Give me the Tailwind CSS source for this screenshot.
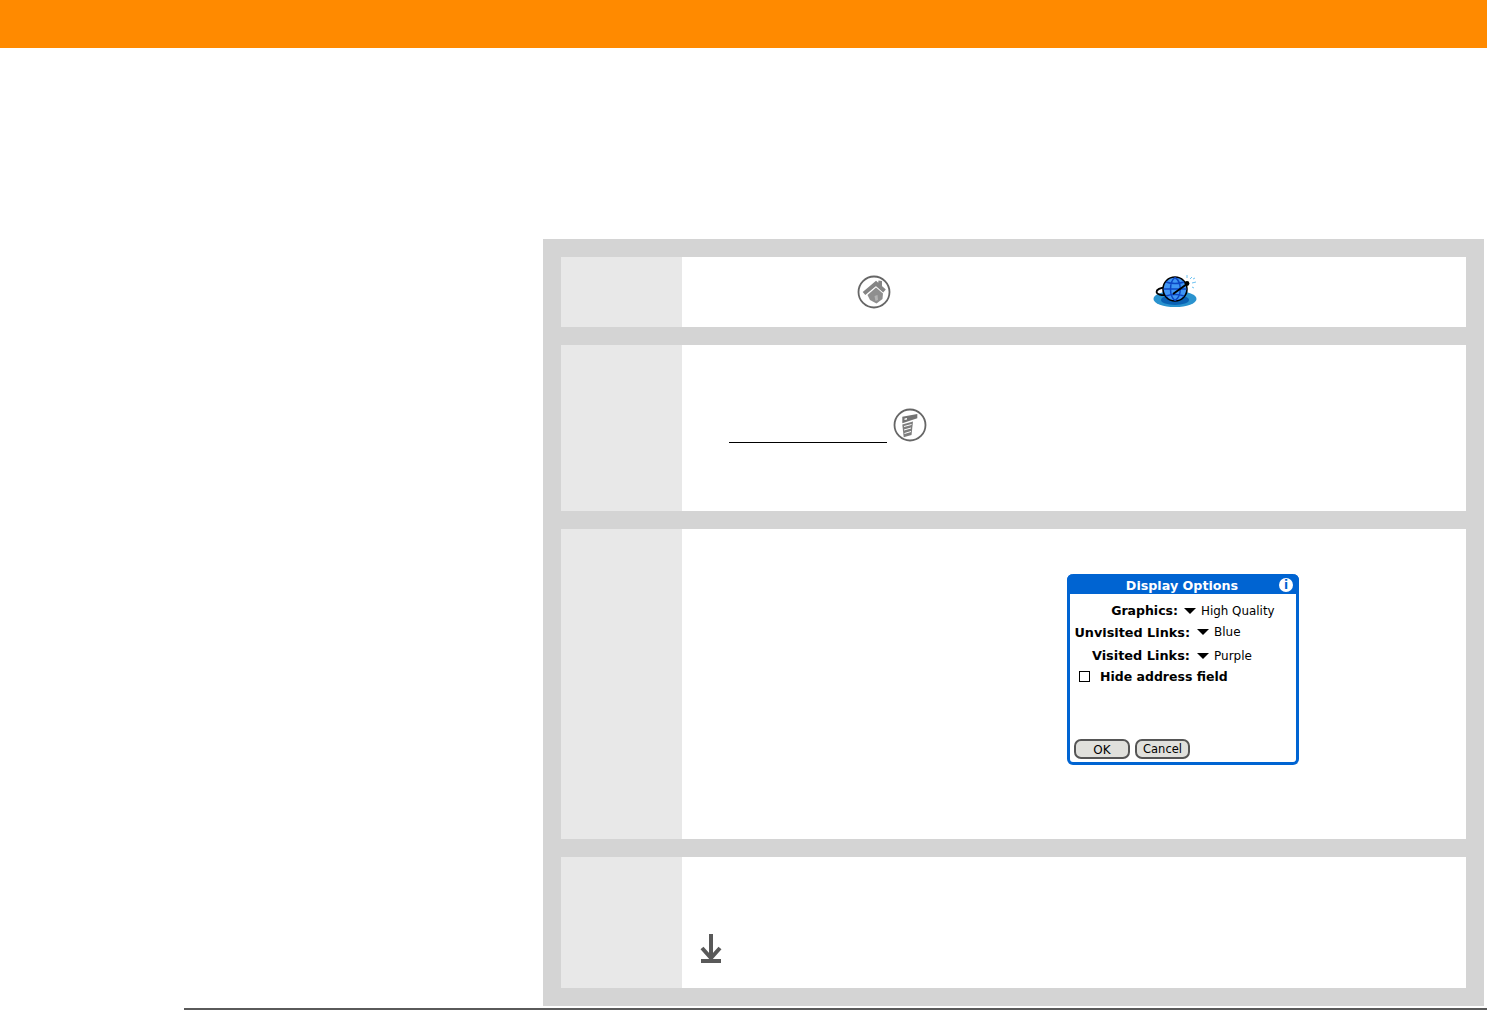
<!DOCTYPE html>
<html lang="en">
<head>
    <meta charset="UTF-8">
    <meta name="viewport" content="width=device-width, initial-scale=1.0">
    <title>Display Options</title>
    <script src="https://cdn.jsdelivr.net/npm/@tailwindcss/browser@4"></script>
</head>
<body class="bg-white h-[1010px] overflow-hidden flex flex-col font-['Liberation_Sans',sans-serif]">

<div class="h-12 bg-[#ff8a00]"></div>

<div class="flex justify-end pr-[3px] pt-[191px]">
    <div class="w-[941px] h-[767px] bg-[#d4d4d4] p-[18px] flex flex-col gap-[18px]">

        <div class="h-[70px] flex bg-white">
            <div class="w-[121px] bg-[#e8e8e8]"></div>
            <div class="flex items-center">
                <svg class="ml-[175px] mb-[1px]" width="34" height="34" viewBox="0 0 34 34">
                    <circle cx="17" cy="17" r="15.5" fill="#fff" stroke="#666" stroke-width="1.8"/>
                    <path d="M7 18.5 L19 8.5 L27.5 16" fill="none" stroke="#858585" stroke-width="4"/>
                    <path d="M21 9 L21.5 5.5 L25 6 L25 12 Z" fill="#858585"/>
                    <path d="M10.5 20 L19 12.5 L26 18.5 L25.5 24 L19.5 28.5 L13 25 Z" fill="#8f8f8f"/>
                    <path d="M17.5 21 L20.5 20 L21 25 L18.5 26 Z" fill="#b4b4b4"/>
                </svg>
                <svg class="ml-[262px] mt-[-3px]" width="46" height="34" viewBox="0 0 46 34">
                    <ellipse cx="22" cy="25" rx="21.5" ry="8" fill="#2a93cf"/>
                    <ellipse cx="22" cy="26" rx="14" ry="5" fill="#0b62b4"/>
                    <ellipse cx="13" cy="17" rx="9.5" ry="4" fill="none" stroke="#000" stroke-width="1.8" transform="rotate(-6 13 17)"/>
                    <circle cx="22" cy="15" r="12" fill="#3f96f5" stroke="#000" stroke-width="1.6"/>
                    <path d="M10.5 15 H33.5 M22 3.5 C16 8 16 22 22 26.5 M22 3.5 C29 8 29 22 22 26.5 M13 8 C18 10 26 10 31 8 M13 22 C18 20 26 20 31 22" fill="none" stroke="#0d47c4" stroke-width="1.5"/>
                    <path d="M20 20 L34 10" stroke="#000" stroke-width="2"/>
                    <circle cx="34" cy="9.5" r="2.4" fill="#000"/>
                    <path d="M37 5 L39 3 M34 4 L34 1 M39 9 L43 8 M39 13 L41 14 M40 5 L42 4" stroke="#6fc3f2" stroke-width="1"/>
                </svg>
            </div>
        </div>

        <div class="h-[166px] flex bg-white">
            <div class="w-[121px] bg-[#e8e8e8]"></div>
            <div class="flex items-start pl-[47px] pt-[63px]">
                <div class="w-[158px] h-[35px] border-b border-black"></div>
                <svg class="ml-[6px]" width="34" height="34" viewBox="0 0 34 34">
                    <circle cx="17" cy="17" r="15.5" fill="#fff" stroke="#666" stroke-width="1.8"/>
                    <path d="M9.3 8.7 L24.3 6 L24.3 10.3 L9.3 15.3 Z" fill="#737373"/>
                    <path d="M11.5 10.5 L14 10 L14 11.5 L11.5 12 Z" fill="#fff"/>
                    <path d="M9.3 16.5 L20 13.5 L18.5 27 L10.7 29.3 Z" fill="#7d7d7d"/>
                    <path d="M11 18.5 L18.5 16.5 M11 22 L18 20 M11.5 25.5 L18 23.5" stroke="#fff" stroke-width="1"/>
                </svg>
            </div>
        </div>

        <div class="h-[310px] flex bg-white">
            <div class="w-[121px] bg-[#e8e8e8]"></div>
            <div class="pl-[385px] pt-[45px]">
                <div class="w-[232px] h-[191px] bg-white border-[3px] border-t-0 border-[#0064d2] rounded-[6px] flex flex-col font-['DejaVu_Sans',sans-serif] text-[12px] text-black leading-none">
                    <div class="h-[20px] -mx-[3px] bg-[#0064d2] rounded-t-[6px] flex items-center relative text-white font-bold text-[12.7px] pt-[5px]">
                        <span class="w-full text-center pr-[2px]">Display Options</span>
                        <span class="absolute right-[6px] top-[4px] w-[14px] h-[14px] rounded-full bg-white text-[#0064d2] text-[12px] font-bold flex items-center justify-center">i</span>
                    </div>
                    <div class="flex items-center h-[22px] mt-[5px] pt-[2px]">
                        <span class="w-[108px] text-right font-bold text-[12.5px]">Graphics:</span>
                        <span class="ml-[6px] w-0 h-0 border-x-[6px] border-x-transparent border-t-[6px] border-t-black"></span>
                        <span class="ml-[5px] text-[11.9px] pt-[1px]">High Quality</span>
                    </div>
                    <div class="flex items-center h-[22px]">
                        <span class="w-[120px] text-right font-bold text-[12.8px] whitespace-nowrap pt-[3px]">Unvisited Links:</span>
                        <span class="ml-[7px] w-0 h-0 border-x-[6px] border-x-transparent border-t-[6px] border-t-black"></span>
                        <span class="ml-[5px]">Blue</span>
                    </div>
                    <div class="flex items-center h-[22px] pt-[3px]">
                        <span class="w-[120px] text-right font-bold text-[12.9px] whitespace-nowrap pt-[1px]">Visited Links:</span>
                        <span class="ml-[7px] w-0 h-0 border-x-[6px] border-x-transparent border-t-[6px] border-t-black"></span>
                        <span class="ml-[5px]">Purple</span>
                    </div>
                    <div class="flex items-center h-[22px] pt-[1px]">
                        <span class="ml-[9px] w-[11px] h-[11px] border-[1.5px] border-black"></span>
                        <span class="ml-[10px] font-bold text-[12.5px] pt-[1px]">Hide address field</span>
                    </div>
                    <div class="mt-auto mb-[3px] ml-[4px] flex gap-[5px]">
                        <button class="w-[56px] h-[20px] bg-[#e0e0dc] border-2 border-[#555] rounded-[7px] text-[12px] pt-[1px]">OK</button>
                        <button class="w-[55px] h-[20px] bg-[#e0e0dc] border-2 border-[#555] rounded-[7px] text-[11.5px] pt-[2px]">Cancel</button>
                    </div>
                </div>
            </div>
        </div>

        <div class="h-[131px] flex bg-white">
            <div class="w-[121px] bg-[#e8e8e8]"></div>
            <div class="pl-[17px] pt-[77px]">
                <svg width="24" height="30" viewBox="0 0 24 30">
                    <path d="M12 0 V25 M3 14 L12 24 L21 14" fill="none" stroke="#595959" stroke-width="4"/>
                    <path d="M2 25 H22 V29 H2 Z" fill="#595959"/>
                </svg>
            </div>
        </div>
    </div>
</div>

<div class="mt-[2px] ml-[184px] h-[2px] bg-[#5a5a5a]"></div>

</body>
</html>
